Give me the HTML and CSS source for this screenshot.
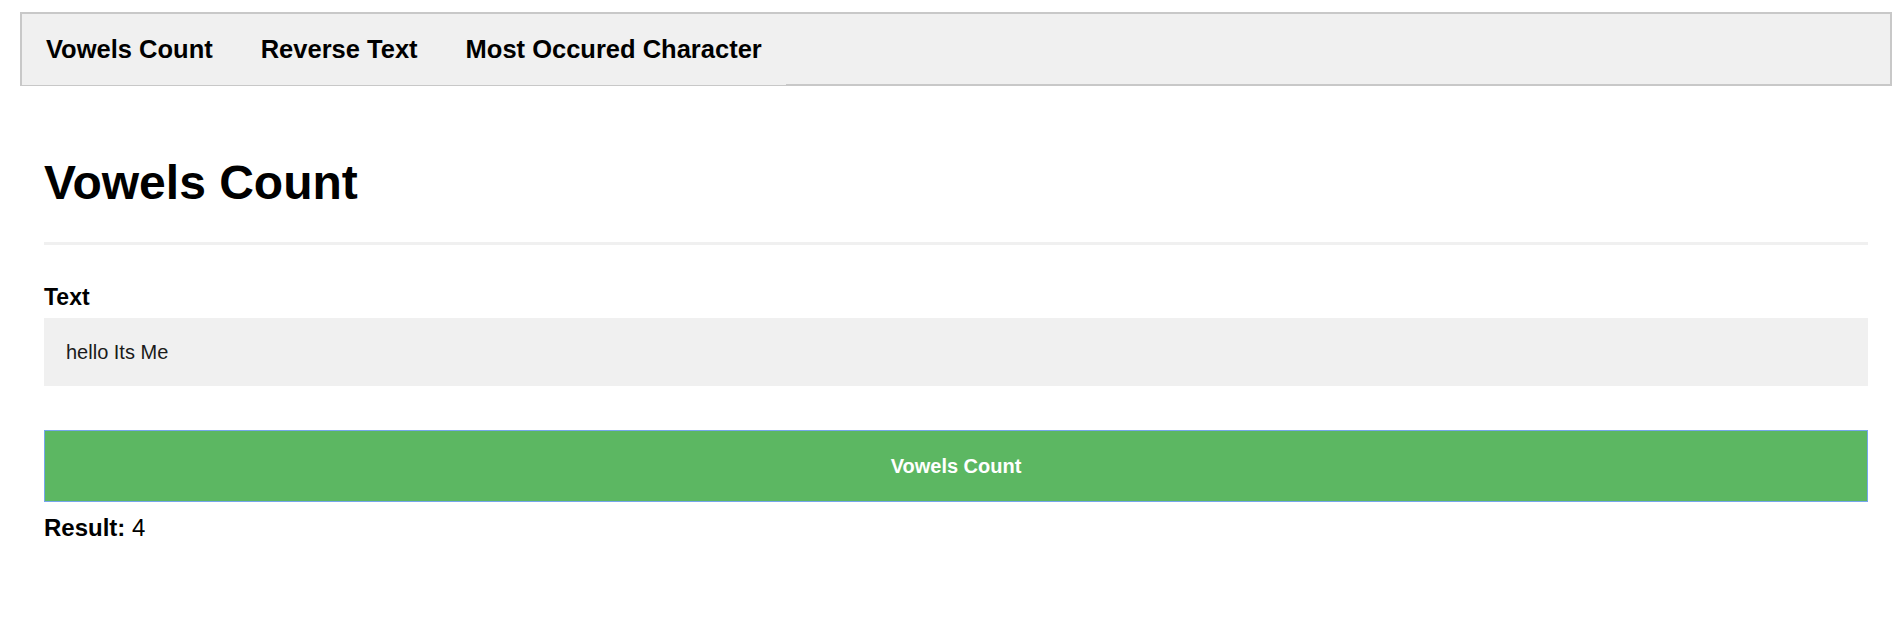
FILE: index.html
```html
<!DOCTYPE html>
<html lang="en">
<head>
<meta charset="utf-8">
<title>Vowels Count</title>
<link rel="stylesheet" href="styles.css">
</head>
<body>
<div class="page">
  <nav class="nav">
    <ul class="nav-list">
      <li class="nav-item"><a class="nav-link" href="#">Vowels Count</a></li>
      <li class="nav-item"><a class="nav-link" href="#">Reverse Text</a></li>
      <li class="nav-item"><a class="nav-link" href="#">Most Occured Character</a></li>
    </ul>
  </nav>
  <main class="content">
    <h1 class="title">Vowels Count</h1>
    <hr class="divider">
    <form class="form">
      <label class="label" for="text">Text</label>
      <input class="input" id="text" type="text" value="hello Its Me">
      <button class="button" type="button">Vowels Count</button>
    </form>
    <p class="result"><strong>Result:</strong> 4</p>
  </main>
</div>
</body>
</html>
```
FILE: styles.css
```css
* { box-sizing: border-box; }

body {
  margin: 0;
  font-family: "Liberation Sans", Arial, sans-serif;
  color: #000;
  background: #fff;
}

.page {
  margin: 12px 7px 0 20px;
}

.nav {
  border: 2px solid #c8c8c8;
  background: #f0f0f0;
  height: 74px;
  display: flex;
}

.nav-list {
  list-style: none;
  margin: 0 0 -1px;
  padding: 0 0 1px;
  height: 71px;
  display: flex;
  align-items: center;
  background: #f0f0f0;
  position: relative;
}

.nav-item {
  padding: 0 24px;
}

.nav-link {
  font-size: 25.5px;
  font-weight: bold;
  color: #000;
  text-decoration: none;
}

.content {
  padding: 0 24px;
}

.title {
  margin: 68px 0 0;
  font-size: 48px;
  line-height: 58px;
  font-weight: bold;
}

.divider {
  margin: 30px 0 0;
  border: 0;
  height: 3px;
  background: #f0f0f0;
}

.form {
  display: flex;
  flex-direction: column;
}

.label {
  margin-top: 39px;
  font-size: 23px;
  line-height: 26px;
  font-weight: bold;
}

.input {
  margin-top: 8px;
  height: 68px;
  border: 0;
  background: #f0f0f0;
  padding: 0 22px;
  font-family: "Liberation Sans", Arial, sans-serif;
  font-size: 20px;
  color: #1a1a1a;
  outline: none;
}

.button {
  margin-top: 44px;
  height: 72px;
  border: 1px solid #76a6ec;
  background: #5cb762;
  color: #fff;
  font-family: "Liberation Sans", Arial, sans-serif;
  font-size: 20px;
  font-weight: bold;
}

.result {
  margin: 12px 0 0;
  font-size: 24px;
  line-height: 28px;
}
```
